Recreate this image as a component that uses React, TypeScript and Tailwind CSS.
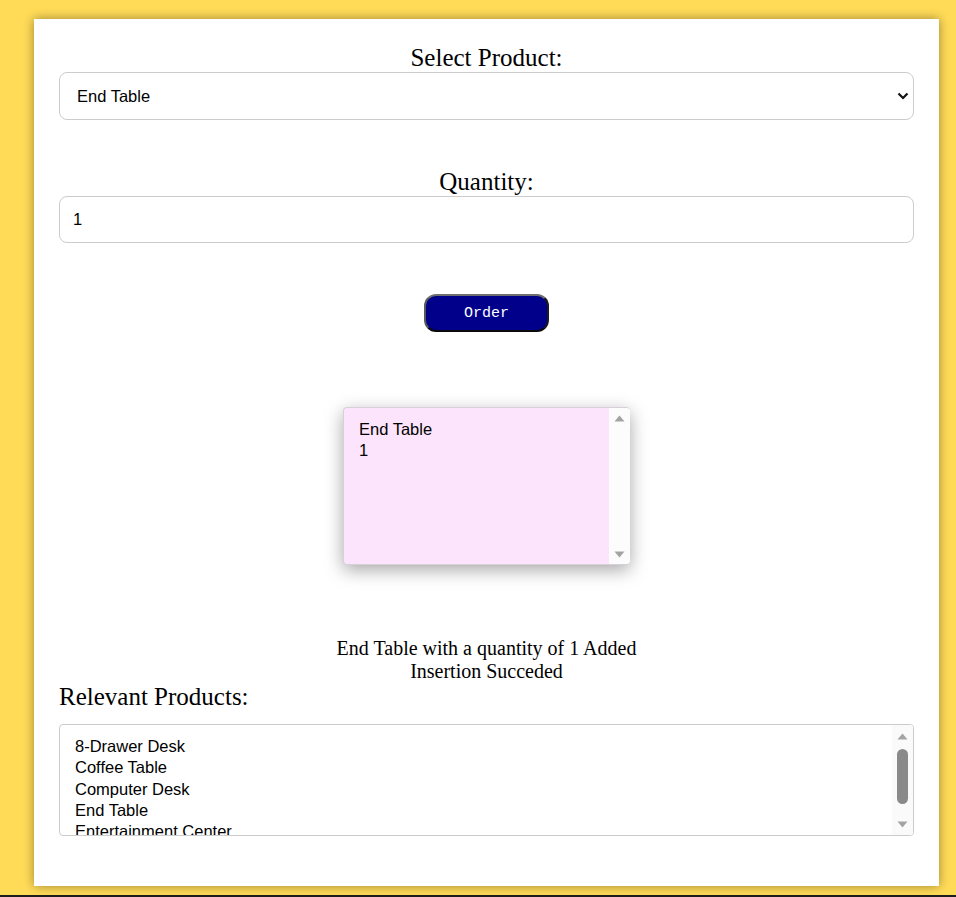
import React from "react";

const serif = "font-['Liberation_Serif',_'Times_New_Roman',_serif]";
const sans = "font-['Liberation_Sans',_Arial,_sans-serif]";

function UpArrow() {
  return (
    <svg width="11" height="7" viewBox="0 0 11 7">
      <path d="M0.5 6.5 L5.5 0.5 L10.5 6.5 Z" fill="#a3a3a3" />
    </svg>
  );
}
function DownArrow() {
  return (
    <svg width="11" height="7" viewBox="0 0 11 7">
      <path d="M0.5 0.5 L5.5 6.5 L10.5 0.5 Z" fill="#a3a3a3" />
    </svg>
  );
}

export default function App() {
  const products = [
    "8-Drawer Desk",
    "Coffee Table",
    "Computer Desk",
    "End Table",
    "Entertainment Center",
    "Executive Desk",
  ];
  return (
    <div className="min-h-[897px] bg-[#ffdb58] flex flex-col">
      <div className="h-[895px] pt-[19px]">
        <div className="ml-[34px] w-[905px] h-[867px] bg-white shadow-[0_0_10px_rgba(0,0,0,0.4)] px-[25px] pt-[24px] flex flex-col">
          <div className={`${serif} text-[25px] leading-[29px] text-center text-black`}>Select Product:</div>
          <div className={`${sans} h-[48px] border border-[#cccccc] rounded-[8px] flex items-center justify-between pl-[17px] pr-[4px] text-[16.5px] text-black`}>
            <span>End Table</span>
            <svg width="12" height="8" viewBox="0 0 12 8">
              <path d="M1.5 1.5 L6 6 L10.5 1.5" fill="none" stroke="#111" strokeWidth="2.2" />
            </svg>
          </div>

          <div className={`${serif} mt-[47px] text-[25px] leading-[29px] text-center text-black`}>Quantity:</div>
          <div className={`${sans} h-[47px] border border-[#cccccc] rounded-[8px] flex items-center pl-[13px] text-[16.5px] text-black`}>
            1
          </div>

          <div className="mt-[51px] self-center w-[125px] h-[38px] rounded-[12px] bg-[#00008b] border-2 border-t-[#6f6f6f] border-l-[#5a5a5a] border-r-[#1a1a1a] border-b-[#0a0a0a] flex items-center justify-center pt-[3px]">
            <span className="font-['Liberation_Mono',_'DejaVu_Sans_Mono',_monospace] text-[15px] text-white">Order</span>
          </div>

          <div className="mt-[75px] self-center w-[287px] h-[158px] flex bg-[#fce4fc] border-l border-t border-b border-[#d8d0d8] rounded-[4px] shadow-[0_5px_18px_rgba(0,0,0,0.35)] overflow-hidden">
            <div className={`${sans} flex-1 pl-[15px] pt-[11px] text-[16.5px] leading-[21.33px] text-black`}>
              <div>End Table</div>
              <div>1</div>
            </div>
            <div className="w-[21px] bg-[#fcfcfc] flex flex-col items-center justify-between pt-[7px] pb-[6px]">
              <UpArrow />
              <DownArrow />
            </div>
          </div>

          <div className={`${serif} mt-[72px] text-[20px] leading-[22.5px] text-center text-black`}>
            <div>End Table with a quantity of 1 Added</div>
            <div>Insertion Succeded</div>
          </div>

          <div className={`${serif} text-[25px] leading-[29px] text-black`}>Relevant Products:</div>

          <div className="mt-[13px] h-[112px] border border-[#cccccc] rounded-[4px] flex overflow-hidden">
            <div className={`${sans} flex-1 pl-[15px] pt-[11px] text-[16.5px] leading-[21.33px] text-black overflow-hidden`}>
              {products.map((p) => (
                <div key={p}>{p}</div>
              ))}
            </div>
            <div className="w-[21px] bg-[#fafafa] flex flex-col items-center pt-[8px] pb-[7px]">
              <UpArrow />
              <div className="mt-[9px] w-[11px] h-[55px] rounded-full bg-[#8a8a8a]" />
              <div className="flex-1" />
              <DownArrow />
            </div>
          </div>
        </div>
      </div>
      <div className="h-[2px] bg-[#1c1c1c]" />
    </div>
  );
}
